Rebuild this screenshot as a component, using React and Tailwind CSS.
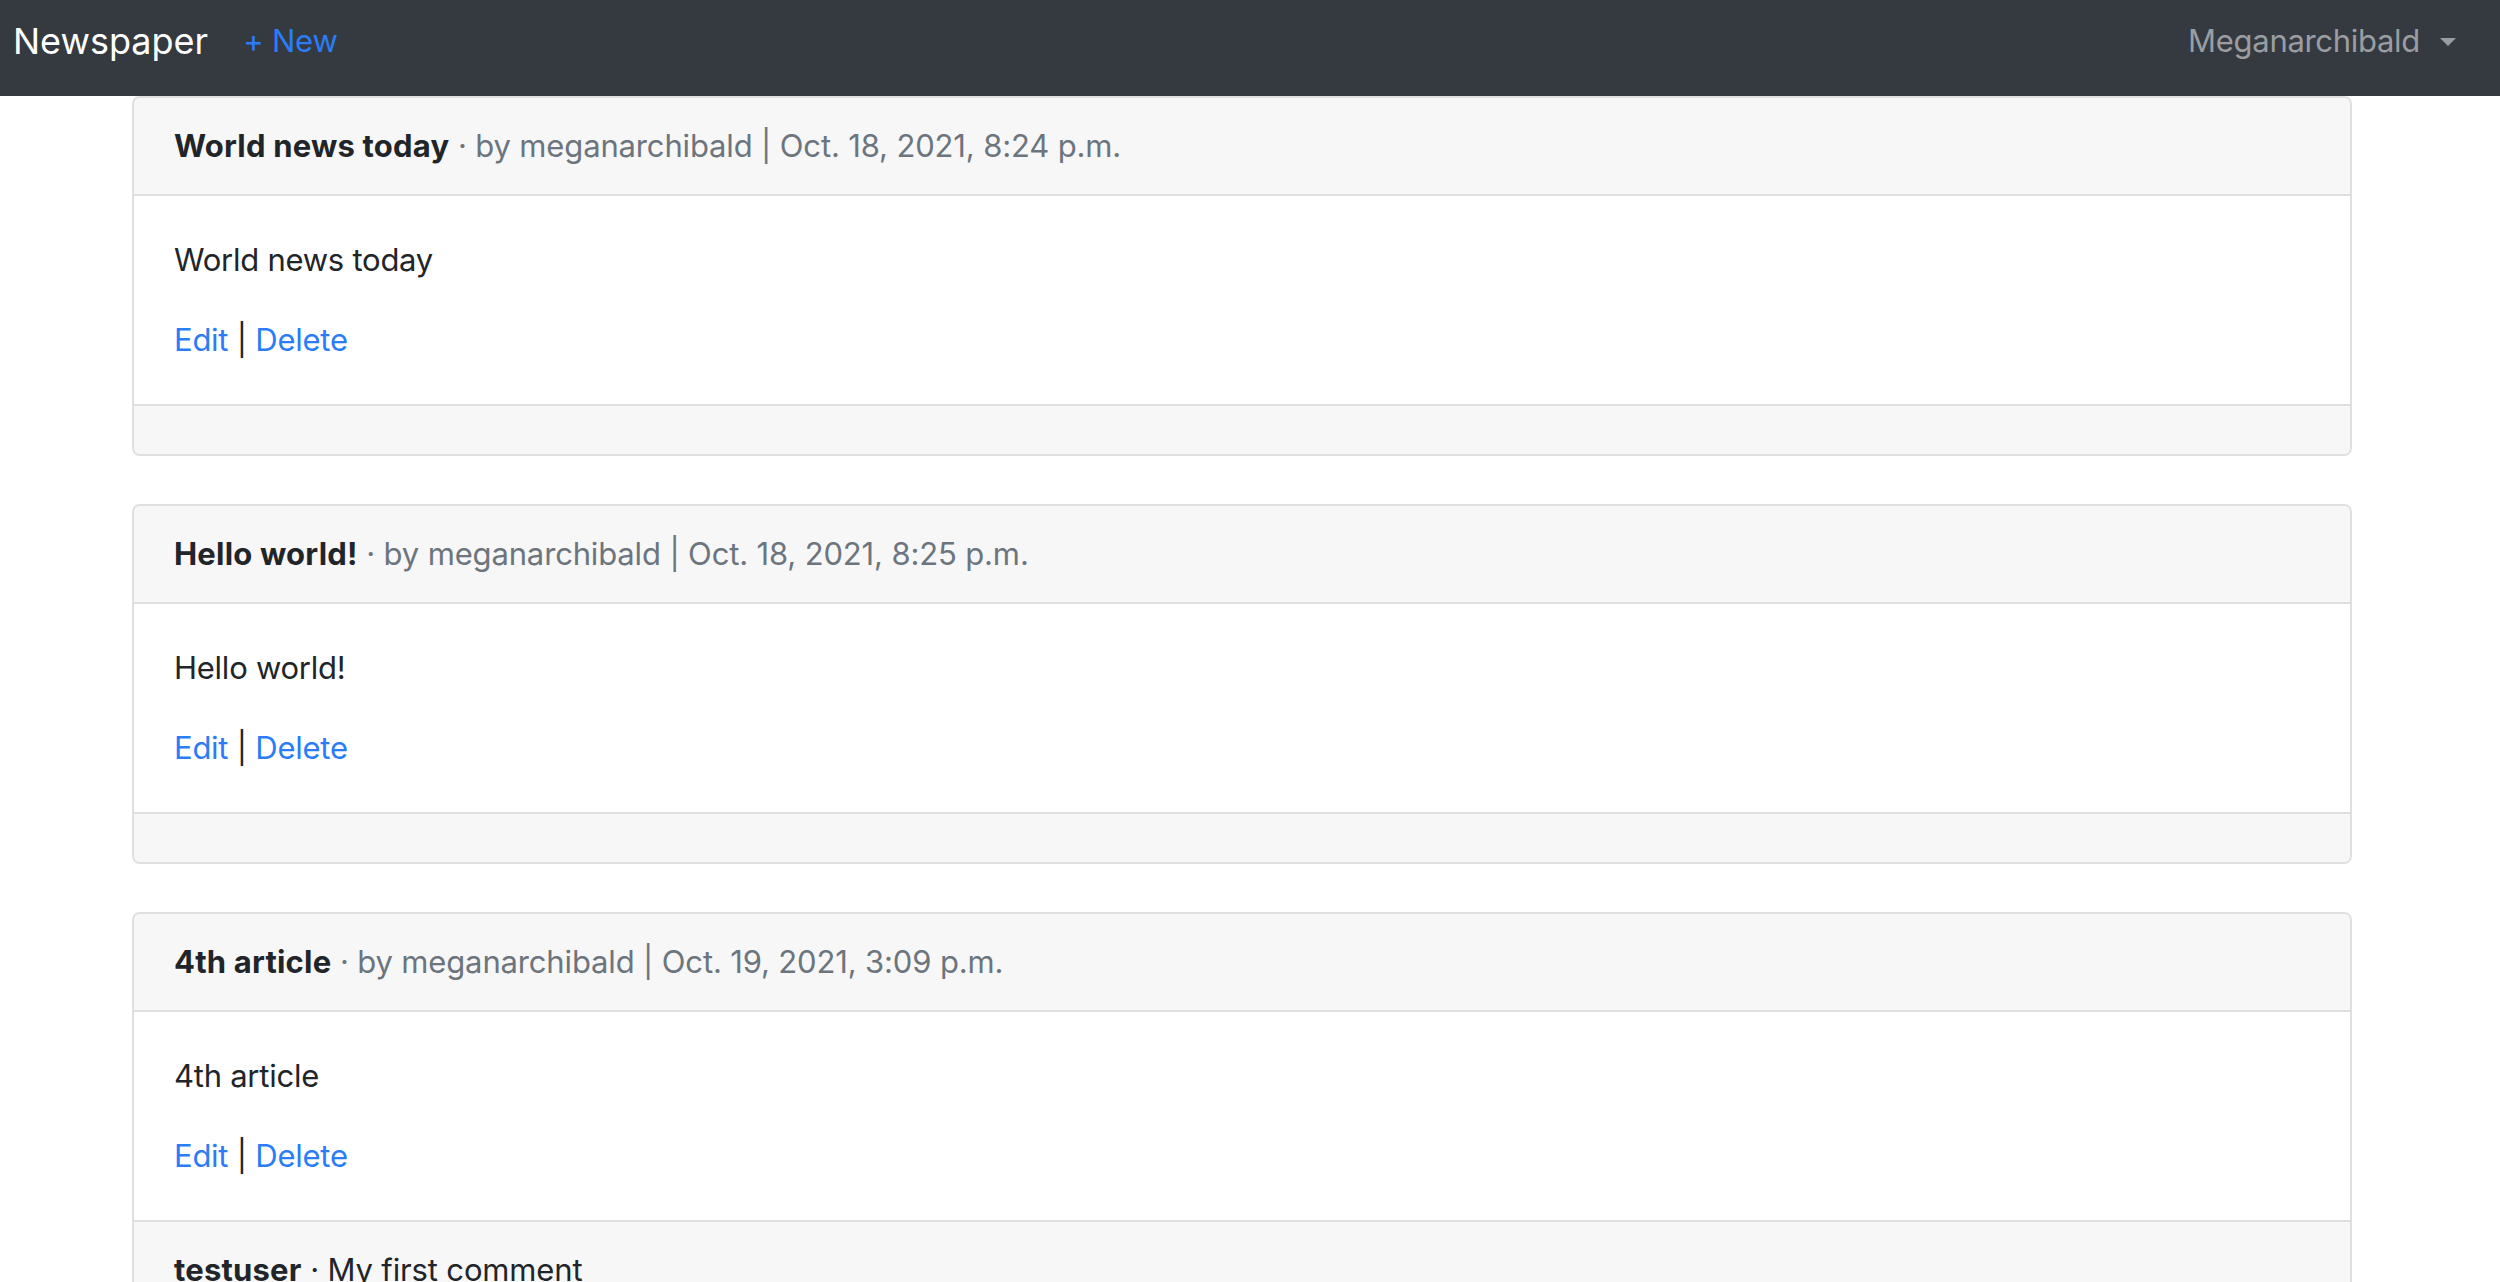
const articles = [
  {
    id: 1,
    title: 'World news today',
    author: 'meganarchibald',
    date: 'Oct. 18, 2021, 8:24 p.m.',
    body: 'World news today',
    comments: [],
  },
  {
    id: 2,
    title: 'Hello world!',
    author: 'meganarchibald',
    date: 'Oct. 18, 2021, 8:25 p.m.',
    body: 'Hello world!',
    comments: [],
  },
  {
    id: 3,
    title: '4th article',
    author: 'meganarchibald',
    date: 'Oct. 19, 2021, 3:09 p.m.',
    body: '4th article',
    comments: [{ author: 'testuser', text: 'My first comment' }],
  },
];

const Navbar = () => (
  <nav className="h-[96px] bg-[#343a40] flex items-center justify-between pb-[14px] pl-[13px] pr-[44px]">
    <div className="flex items-center">
      <a href="#" className="text-white text-[36px] leading-[54px]">Newspaper</a>
      <a href="#" className="ml-[35px] text-[#2b7df7] text-[31px] leading-[48px] tracking-[-0.2px]">+ New</a>
    </div>
    <div className="flex items-center text-[#9a9da1]">
      <span className="text-[31px] leading-[48px] tracking-[-0.3px]">Meganarchibald</span>
      <span className="ml-[20px] mt-[2px] w-0 h-0 border-l-[8px] border-r-[8px] border-t-[8px] border-l-transparent border-r-transparent border-t-[#9a9da1]"></span>
    </div>
  </nav>
);

const ArticleCard = ({ article }) => (
  <div className="mb-[48px] border-2 border-[#dfdfdf] rounded-[8px] overflow-hidden bg-white">
    <div className="bg-[#f7f7f7] border-b-2 border-[#dfdfdf] px-[40px] py-[24px] text-[31px] leading-[48px]">
      <span className="font-bold text-[#212529] tracking-[0.2px]">{article.title}</span>
      <span className="text-[#6c757d] tracking-[-0.15px]"> &middot; by {article.author} | {article.date}</span>
    </div>
    <div className="px-[40px] py-[40px] text-[31px] leading-[48px] tracking-[-0.25px] text-[#212529]">
      <p className="mb-[32px]">{article.body}</p>
      <p>
        <a href="#" className="text-[#2b7df7]">Edit</a> | <a href="#" className="text-[#2b7df7]">Delete</a>
      </p>
    </div>
    <div className="bg-[#f7f7f7] border-t-2 border-[#dfdfdf] px-[40px] py-[24px] text-[31px] leading-[48px] text-[#212529]">
      {article.comments.map((c, i) => (
        <p key={i}>
          <span className="font-bold tracking-[0.2px]">{c.author}</span>
          <span className="tracking-[-0.15px]"> &middot; {c.text}</span>
        </p>
      ))}
    </div>
  </div>
);

export default function App() {
  return (
    <div className="min-h-screen bg-white font-['Inter',sans-serif]">
      <Navbar />
      <div className="ml-[132px] w-[2220px]">
        {articles.map((a) => (
          <ArticleCard key={a.id} article={a} />
        ))}
      </div>
    </div>
  );
}
